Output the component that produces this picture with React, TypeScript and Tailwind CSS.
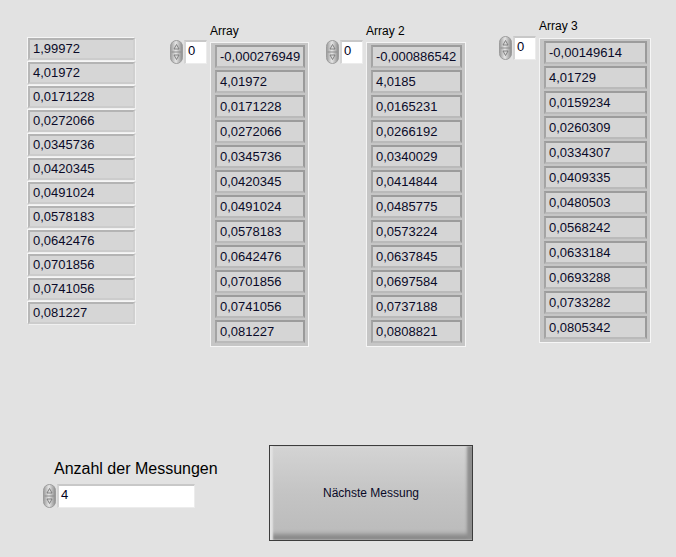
import React from 'react';

const col0 = ['1,99972', '4,01972', '0,0171228', '0,0272066', '0,0345736', '0,0420345', '0,0491024', '0,0578183', '0,0642476', '0,0701856', '0,0741056', '0,081227'];
const arr1 = ['-0,000276949', '4,01972', '0,0171228', '0,0272066', '0,0345736', '0,0420345', '0,0491024', '0,0578183', '0,0642476', '0,0701856', '0,0741056', '0,081227'];
const arr2 = ['-0,000886542', '4,0185', '0,0165231', '0,0266192', '0,0340029', '0,0414844', '0,0485775', '0,0573224', '0,0637845', '0,0697584', '0,0737188', '0,0808821'];
const arr3 = ['-0,00149614', '4,01729', '0,0159234', '0,0260309', '0,0334307', '0,0409335', '0,0480503', '0,0568242', '0,0633184', '0,0693288', '0,0733282', '0,0805342'];

const font = { fontFamily: '"Liberation Sans", Arial, sans-serif' };

const Spinner: React.FC = () => (
  <svg width="13" height="24" viewBox="0 0 13 24" className="shrink-0">
    <defs>
      <linearGradient id="spg" x1="0" x2="1" y1="0" y2="0">
        <stop offset="0" stopColor="#9a9a9a" />
        <stop offset="0.45" stopColor="#e6e6e6" />
        <stop offset="1" stopColor="#8a8a8a" />
      </linearGradient>
    </defs>
    <rect x="0.5" y="0.5" width="12" height="23" rx="6" fill="url(#spg)" stroke="#9c9c9c" />
    <line x1="1.5" y1="12" x2="11.5" y2="12" stroke="#8c8c8c" />
    <path d="M6.5 4.5 L9 9 L4 9 Z" fill="#d8d8d8" stroke="#6e6e6e" strokeWidth="0.8" />
    <path d="M6.5 19.5 L9 15 L4 15 Z" fill="#d8d8d8" stroke="#6e6e6e" strokeWidth="0.8" />
  </svg>
);

const IndexBox: React.FC<{ width: number; value: string }> = ({ width, value }) => (
  <div className="flex items-start">
    <Spinner />
    <div
      className="ml-[1px] h-[24px] bg-white border-t-2 border-l-2 border-t-[#c8c8c8] border-l-[#d4d4d4] border-b border-r border-b-[#ececec] border-r-[#ececec] text-[13px] leading-[18px] pl-[2px] text-[#000020]"
      style={{ width }}
    >
      {value}
    </div>
  </div>
);

const ArrayCell: React.FC<{ v: string }> = ({ v }) => (
  <div className="h-[23px] bg-[#d5d5d5] border-2 border-t-[#9c9c9c] border-l-[#a4a4a4] border-r-[#9a9a9a] border-b-[#bababa] text-[13px] leading-[19px] pl-[3px] text-[#0a0a28] whitespace-nowrap">
    {v}
  </div>
);

const ArrayFrame: React.FC<{ values: string[]; width: number }> = ({ values, width }) => (
  <div
    className="bg-[#c6c6c6] border border-t-[#f4f4f4] border-l-[#f4f4f4] border-r-[#f6f6f6] border-b-[#f6f6f6] pl-[4px] pr-[3px] pt-[2px] pb-[3px] flex flex-col gap-[2px]"
    style={{ width }}
  >
    {values.map((v, i) => (
      <ArrayCell key={i} v={v} />
    ))}
  </div>
);

const ArrayGroup: React.FC<{ label: string; values: string[]; width: number; className: string; labelClass: string }> = ({
  label,
  values,
  width,
  className,
  labelClass,
}) => (
  <div className={className}>
    <div className={`ml-[40px] text-[12px] leading-[14px] text-black ${labelClass}`}>{label}</div>
    <div className="flex items-start gap-[3px]">
      <IndexBox width={23} value="0" />
      <div className="mt-[2px]">
        <ArrayFrame values={values} width={width} />
      </div>
    </div>
  </div>
);

export default function App() {
  return (
    <div className="w-[676px] h-[557px] bg-[#e2e2e2] overflow-hidden flex flex-col" style={font}>
      <div className="h-[445px] flex items-start pl-[28px]">
        <div className="mt-[38px] w-[107px] flex flex-col gap-[2px]">
          {col0.map((v, i) => (
            <div
              key={i}
              className="h-[22px] bg-[#d6d6d6] border-2 border-t-[#b4b4b4] border-l-[#b8b8b8] border-r-[#d0d0d0] border-b-[#cccccc] shadow-[-1px_-1px_0_#f6f6f6,1px_1px_0_#f0f0f0] text-[13px] leading-[18px] pl-[3px] text-[#0a0a28]"
            >
              {v}
            </div>
          ))}
        </div>
        <ArrayGroup label="Array" values={arr1} width={99} className="ml-[35px] mt-[24px]" labelClass="h-[16px]" />
        <ArrayGroup label="Array 2" values={arr2} width={100} className="ml-[17px] mt-[24px]" labelClass="h-[16px]" />
        <ArrayGroup label="Array 3" values={arr3} width={112} className="ml-[33px] mt-[19px]" labelClass="h-[17px]" />
      </div>
      <div className="flex items-start pl-[43px]">
        <div className="w-[152px] mt-[15px] flex flex-col">
          <div className="ml-[11px] h-[24px] text-[16px] leading-[18px] text-black whitespace-nowrap">Anzahl der Messungen</div>
          <IndexBox width={139} value="4" />
        </div>
        <button className="ml-[74px] w-[204px] h-[96px] border border-[#3c3c3c] bg-gradient-to-b from-[#d4d4d4] via-[#c4c4c4] to-[#bababa] shadow-[inset_3px_0_2px_#e4e4e4,inset_-5px_0_3px_#8e8e8e,inset_0_-6px_4px_#8a8a8a,inset_0_2px_1px_#e6e6e6] text-[12px] text-[#0a0a28] flex items-center justify-center">
          Nächste Messung
        </button>
      </div>
    </div>
  );
}
